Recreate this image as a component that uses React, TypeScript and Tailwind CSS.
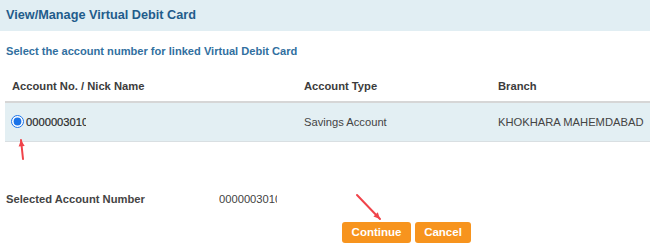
import React from 'react'

const Arrow: React.FC<{ className: string, x1: number, y1: number, x2: number, y2: number, w: number, h: number }> = ({ className, x1, y1, x2, y2, w, h }) => {
    const ang = Math.atan2(y2 - y1, x2 - x1)
    const l = 7
    const a1 = ang + Math.PI - 0.45
    const a2 = ang + Math.PI + 0.45
    return (
        <svg className={className} width={w} height={h} viewBox={`0 0 ${w} ${h}`}>
            <line x1={x1} y1={y1} x2={x2} y2={y2} stroke="#f0434a" strokeWidth="2" strokeLinecap="round" />
            <polygon
                points={`${x2},${y2} ${x2 + l * Math.cos(a1)},${y2 + l * Math.sin(a1)} ${x2 + l * Math.cos(a2)},${y2 + l * Math.sin(a2)}`}
                fill="#f0434a"
            />
        </svg>
    )
}

const App: React.FC = () => {
    return (
        <div className="relative w-[650px] h-[252px] bg-white overflow-hidden font-['Liberation_Sans',Arial,sans-serif]">
            <div className="h-[31px] bg-[#e1eef3] flex items-center px-[6px]">
                <h1 className="text-[12.7px] font-bold text-[#1f5c8b]">View/Manage Virtual Debit Card</h1>
            </div>

            <p className="mt-[13px] h-[14px] leading-[14px] px-[6px] text-[11.1px] font-bold text-[#31709f]">
                Select the account number for linked Virtual Debit Card
            </p>

            <div className="ml-[5px] mt-[14px]">
                <div className="grid grid-cols-[293px_194px_1fr] h-[31px] items-center border-b-2 border-[#d6d6d6] text-[11.2px] font-bold text-[#3c3c3c]">
                    <span className="pl-[7px]">Account No. / Nick Name</span>
                    <span className="pl-[6px]">Account Type</span>
                    <span className="pl-[6px]">Branch</span>
                </div>
                <div className="grid grid-cols-[293px_194px_1fr] h-[39px] items-center bg-[#e3eff3] border-b border-[#d9dfe2] text-[11.2px] text-[#444]">
                    <label className="flex items-center gap-[2px] pl-[6px]">
                        <input type="radio" defaultChecked className="w-[13px] h-[13px] m-0 accent-[#1a73e8]" />
                        <span className="w-[60px] overflow-hidden whitespace-nowrap text-[#2a2a2a] [-webkit-text-stroke:0.2px_#2a2a2a]">0000003010</span>
                    </label>
                    <span className="pl-[6px] whitespace-nowrap">Savings Account</span>
                    <span className="pl-[6px] whitespace-nowrap">KHOKHARA MAHEMDABAD</span>
                </div>
            </div>

            <div className="flex items-center h-[14px] mt-[50px] px-[6px] text-[11.2px] text-[#444]">
                <span className="w-[213px] font-bold">Selected Account Number</span>
                <span className="w-[58px] overflow-hidden whitespace-nowrap">0000003010</span>
            </div>

            <div className="flex gap-[4px] ml-[342px] mt-[16px]">
                <button className="h-[21px] w-[69px] rounded-[3px] bg-[#f7941e] text-white text-[11.5px] font-bold">Continue</button>
                <button className="h-[21px] w-[56px] rounded-[3px] bg-[#f7941e] text-white text-[11.5px] font-bold">Cancel</button>
            </div>

            <Arrow className="absolute left-[14px] top-[136px]" w={16} h={28} x1={9} y1={23} x2={7} y2={4} />
            <Arrow className="absolute left-[350px] top-[190px]" w={36} h={34} x1={7} y1={5} x2={30} y2={29} />
        </div>
    )
}

export default App
